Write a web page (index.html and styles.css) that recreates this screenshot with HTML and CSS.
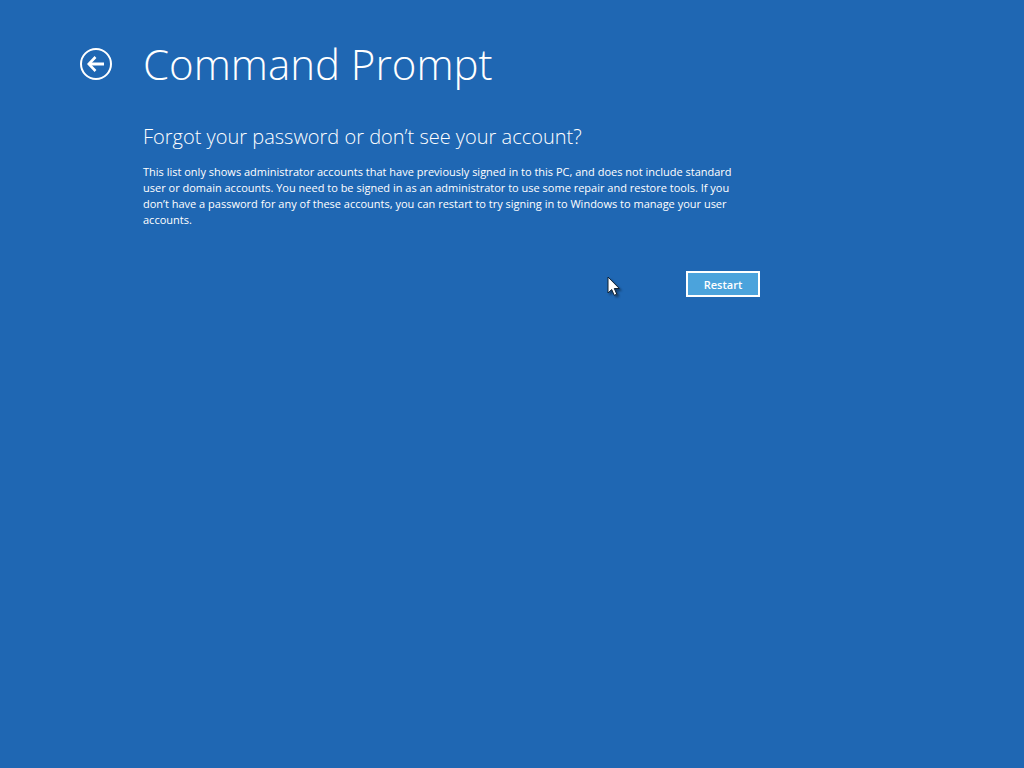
FILE: index.html
```html
<!DOCTYPE html>
<html lang="en">
<head>
    <meta charset="UTF-8">
    <meta name="viewport" content="width=device-width, initial-scale=1.0">
    <title>Command Prompt</title>
    <link rel="stylesheet" href="styles.css">
</head>
<body>
<main class="screen">
    <button type="button" class="back" aria-label="Back">
        <svg width="34" height="34" viewBox="0 0 34 34" fill="none" stroke="currentColor">
            <circle cx="17" cy="17" r="15" stroke-width="2"></circle>
            <path d="M25 17H10" stroke-width="3"></path>
            <path d="M16.5 10L9.8 17L16.5 24" stroke-width="2.6"></path>
        </svg>
    </button>
    <div class="content">
        <h1>Command Prompt</h1>
        <h2>Forgot your password or don’t see your account?</h2>
        <p>This list only shows administrator accounts that have previously signed in to this PC, and does not include standard user or domain accounts. You need to be signed in as an administrator to use some repair and restore tools. If you don’t have a password for any of these accounts, you can restart to try signing in to Windows to manage your user accounts.</p>
        <div class="actions">
            <button type="button" class="restart">Restart</button>
        </div>
    </div>
</main>

<svg class="cursor" width="14" height="21" viewBox="0 0 14 21" aria-hidden="true">
    <path d="M1 1V17L4.7 13.5L7.2 19.3L9.8 18.2L7.3 12.5H12.3Z" fill="#fff" stroke="#123" stroke-width="1"></path>
</svg>
</body>
</html>
```

FILE: styles.css
```css
:root {
    --bg-color: #1f67b3;
    --button-color: #4ba3dc;
    --text-color: #ffffff;
}

* {
    box-sizing: border-box;
    margin: 0;
    padding: 0;
}

body {
    min-height: 100vh;
    background-color: var(--bg-color);
    color: var(--text-color);
    font-family: 'Segoe UI', 'Open Sans', sans-serif;
}

.screen {
    display: flex;
    align-items: flex-start;
    gap: 30px;
    padding: 36px 24px 24px 79px;
}

.back {
    flex: none;
    margin-top: 11px;
    border: none;
    background: none;
    color: inherit;
    cursor: pointer;
}

.back svg {
    display: block;
}

.content {
    flex: 1;
    max-width: 617px;
}

h1 {
    font-size: 42px;
    line-height: 56px;
    font-weight: 300;
    white-space: nowrap;
}

h2 {
    margin-top: 31px;
    font-size: 20px;
    line-height: 28px;
    font-weight: 300;
}

p {
    margin-top: 13px;
    padding-right: 16px;
    font-size: 11px;
    line-height: 16px;
}

.actions {
    display: flex;
    justify-content: flex-end;
    margin-top: 43px;
}

.restart {
    width: 74px;
    height: 26px;
    border: 2px solid var(--text-color);
    background-color: var(--button-color);
    color: inherit;
    font-family: inherit;
    font-size: 11px;
    font-weight: 600;
    cursor: pointer;
}

.cursor {
    position: absolute;
    top: 276px;
    left: 607px;
    filter: drop-shadow(2px 2px 1px rgba(0, 0, 0, 0.4));
}
```
